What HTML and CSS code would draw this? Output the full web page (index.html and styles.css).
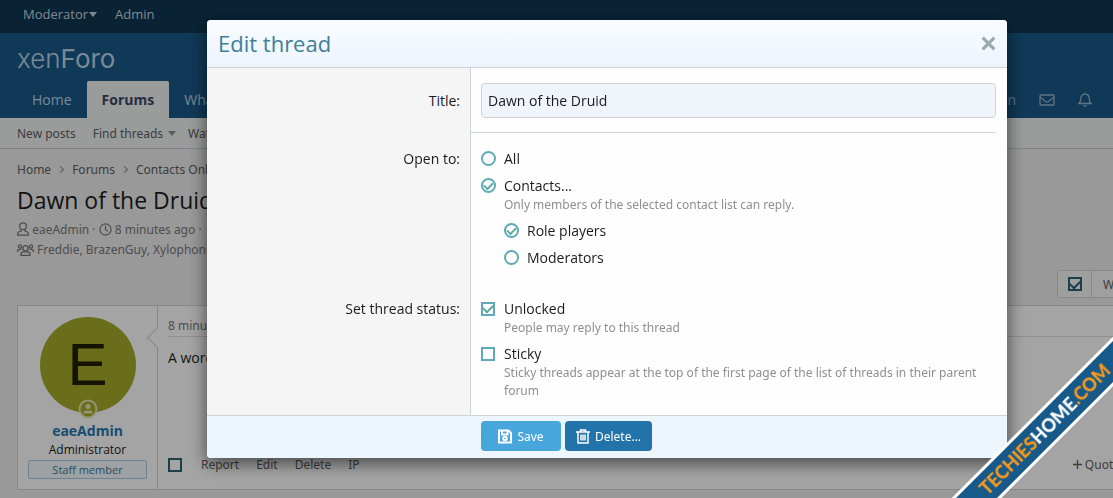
FILE: index.html
```html
<!DOCTYPE html>
<html lang="en">
<head>
  <meta charset="UTF-8" />
  <meta name="viewport" content="width=device-width, initial-scale=1" />
  <title>Dawn of the Druid | XenForo</title>
  <link rel="stylesheet" href="styles.css">
</head>
<body>

  <div class="page">
    <div class="staff-bar">
      <a href="#">Moderator<span class="caret"></span></a>
      <a href="#">Admin</a>
    </div>

    <header class="header">
      <a href="#" class="logo">xen<b>Foro</b></a>
      <nav class="nav">
        <a href="#">Home</a>
        <a href="#" class="active">Forums</a>
        <a href="#">What's new</a>
        <div class="nav-account">
          <a href="#">eaeAdmin</a>
          <a href="#" aria-label="Conversations">
            <svg class="icon-mail" viewBox="0 0 16 12"><rect x="1" y="1" width="14" height="10" rx="1"/><path d="M1 3l5.500 4.500q1.500 1 3 0L15 3"/></svg>
          </a>
          <a href="#" aria-label="Alerts">
            <svg class="icon-bell" viewBox="0 0 14 15"><path d="M7 .5v1.500M1 11.500h12c-1.300-1.300-1.800-2.400-1.800-5C11.200 4 9.500 2.200 7 2.200S2.800 4 2.800 6.500c0 2.600-.5 3.700-1.800 5z"/><path d="M5.500 13.300q1.500 1.500 3 0"/></svg>
          </a>
        </div>
      </nav>
    </header>

    <div class="sub-nav">
      <a href="#">New posts</a>
      <a href="#">Find threads<span class="caret"></span></a>
      <a href="#">Watched</a>
    </div>

    <main class="content">
      <div class="breadcrumb">
        <a href="#">Home</a><i></i><a href="#">Forums</a><i></i><a href="#">Contacts Only</a>
      </div>
      <h1>Dawn of the Druid</h1>
      <div class="meta">
        <svg class="icon-user" viewBox="0 0 12 14"><circle cx="6" cy="4.200" r="3.400"/><path d="M4 7.500v1.500L1.600 10Q.7 10.600.7 12v1.200h10.600V12q0-1.400-.9-2L8 9V7.500"/></svg>
        <a href="#">eaeAdmin</a> ·
        <svg class="icon-clock" viewBox="0 0 14 14"><circle cx="7" cy="7" r="6"/><path d="M7 3v4.300l2.500 1.500"/></svg>
        <a href="#">8 minutes ago</a> ·
      </div>
      <div class="meta">
        <svg class="icon-group" viewBox="0 0 17 12"><circle cx="8.500" cy="4.200" r="2.600"/><circle cx="3" cy="2.500" r="1.600"/><circle cx="14" cy="2.500" r="1.600"/><path d="M4 11.300V10q0-2.200 2.500-2.200h4q2.500 0 2.500 2.200v1.300zM.6 8V7q0-1.700 2.400-1.700h1.500M16.400 8V7q0-1.700-2.400-1.700h-1.500"/></svg>
        Freddie, BrazenGuy, Xylophonist
      </div>

      <div class="toolbar">
        <label class="tool"><input type="checkbox" class="check" aria-label="Select for moderation" checked></label>
        <button class="tool tool-text">Watch</button>
      </div>

      <article class="message">
        <div class="user">
          <div class="avatar">E
            <svg class="online" viewBox="0 0 20 20"><circle class="ring" cx="10" cy="10" r="8.500"/><circle class="fill" cx="10" cy="7.500" r="2.500"/><path class="fill" d="M5.500 14q0-2.600 2.800-2.600h3.400q2.800 0 2.800 2.600v.6h-9z"/></svg>
          </div>
          <a href="#" class="username">eaeAdmin</a>
          <div class="user-title">Administrator</div>
          <div class="user-banner">Staff member</div>
        </div>
        <div class="post">
          <div class="post-date">8 minutes ago</div>
          <p>A word of warning</p>
          <div class="actions">
            <input type="checkbox" class="check" aria-label="Select post">
            <a href="#">Report</a>
            <a href="#">Edit</a>
            <a href="#">Delete</a>
            <a href="#">IP</a>
            <a href="#" class="quote"><svg class="icon-plus" viewBox="0 0 9 9"><path d="M0 4.500h9M4.500 0v9"/></svg> Quote</a>
          </div>
        </div>
      </article>
    </main>
  </div>

  <div class="overlay">
    <form class="dialog" role="dialog" aria-labelledby="dialog-title">
      <div class="dialog-header">
        <h2 id="dialog-title">Edit thread</h2>
        <button type="button" class="close" aria-label="Close">
          <svg viewBox="0 0 16 16"><path d="M2.500 2.500l11 11M13.500 2.500l-11 11"/></svg>
        </button>
      </div>

      <div class="row row-input">
        <div class="row-label"><label for="title">Title:</label></div>
        <div class="row-body">
          <input type="text" id="title" class="input" value="Dawn of the Druid">
        </div>
      </div>

      <div class="row">
        <div class="row-label" id="open-label">Open to:</div>
        <div class="row-body choices" role="group" aria-labelledby="open-label">
          <div>
            <label class="choice"><input type="radio" class="radio" name="open">All</label>
          </div>
          <div>
            <label class="choice"><input type="radio" class="radio" name="open" checked>Contacts...</label>
            <div class="hint">Only members of the selected contact list can reply.</div>
            <div class="choices sub-choices">
              <label class="choice"><input type="radio" class="radio" name="list" checked>Role players</label>
              <label class="choice"><input type="radio" class="radio" name="list">Moderators</label>
            </div>
          </div>
        </div>
      </div>

      <div class="row">
        <div class="row-label" id="status-label">Set thread status:</div>
        <div class="row-body choices" role="group" aria-labelledby="status-label">
          <div>
            <label class="choice"><input type="checkbox" class="check" checked>Unlocked</label>
            <div class="hint">People may reply to this thread</div>
          </div>
          <div>
            <label class="choice"><input type="checkbox" class="check">Sticky</label>
            <div class="hint">Sticky threads appear at the top of the first page of the list of threads in their parent forum</div>
          </div>
        </div>
      </div>

      <div class="dialog-footer">
        <button type="submit" class="button save">
          <svg viewBox="0 0 14 14"><path d="M1 1h9.500L13 3.500V13H1z"/><path d="M4 1.500V5h5.500V1.500"/><circle cx="7" cy="9" r="1.800"/></svg>Save
        </button>
        <button type="button" class="button delete">
          <svg viewBox="0 0 14 15"><path d="M0 3h14M4.500 2.500V1h5v1.500M2 3v11h10V3M5 5.500v6M7 5.500v6M9 5.500v6"/></svg>Delete...
        </button>
      </div>
    </form>
  </div>

  <div class="ribbon"><span>TECHIES</span>HOME<span>.COM</span></div>

</body>
</html>
```

FILE: styles.css
```css
:root {
  --text: #1c1c1c;
  --dimmed: #5c5f60;
  --muted: #8f8f8f;
  --border: #cfd3d8;
  --header: #185886;
  --blue: #2577b1;
  --control: #5fa9b8;
  --bleed: 101px; /* the page runs on past the right edge */
  --small: 12px "Noto Sans", "Open Sans", sans-serif;
}

* {
  box-sizing: border-box;
}

body {
  margin: 0;
  background: #ebebeb;
  color: var(--text);
  font: 14px/21px "Open Sans", "Noto Sans", sans-serif;
  overflow: hidden;
}

a {
  color: inherit;
  text-decoration: none;
}

svg {
  fill: none;
  stroke: currentColor;
  stroke-width: 1.3;
}

.page {
  width: calc(100% + var(--bleed));
}

.caret {
  display: inline-block;
  margin-left: 1px;
  border: 4px solid transparent;
  border-top: 5px solid currentColor;
  border-bottom: 0;
  vertical-align: 2px;
}

/* header */

.staff-bar {
  display: flex;
  gap: 18px;
  height: 33px;
  padding: 4px 23px;
  background: #0f3652;
  color: #c3d3df;
  font-size: 13px;
}

.header {
  background: var(--header);
  color: #b8d4e6;
}

.logo {
  display: block;
  height: 48px;
  padding-left: 17px;
  font: 300 26px/52px Inter, sans-serif;
}

.logo b {
  font-weight: 400;
}

.nav {
  display: flex;
  height: 37px;
  padding-left: 17px;
  line-height: 38px;
}

.nav > a {
  padding: 0 15px;
}

.nav .active {
  background: #edeeef;
  color: #3a4667;
  font-weight: 700;
  border-radius: 2px 2px 0 0;
}

.nav-account {
  display: flex;
  align-items: center;
  gap: 23px;
  margin-left: auto;
  padding-right: 122px;
  color: #93b4c9;
}

.nav-account svg {
  display: block;
}

.icon-mail {
  width: 16px;
  height: 12px;
}

.icon-bell {
  width: 14px;
  height: 15px;
}

.sub-nav {
  display: flex;
  gap: 17px;
  height: 31px;
  padding: 5px 17px;
  background: #edeeef;
  border-bottom: 1px solid #c5c9cc;
  color: var(--dimmed);
  font: var(--small);
  line-height: 21px;
}

.sub-nav .caret {
  margin: 0 -5px 0 5px;
  color: var(--muted);
}

/* thread */

.content {
  padding: 10px 17px;
}

.breadcrumb {
  display: flex;
  align-items: center;
  color: var(--dimmed);
  font: var(--small);
  line-height: 21px;
}

.breadcrumb i {
  width: 5px;
  height: 5px;
  margin: 0 9px 0 7px;
  border: solid var(--muted);
  border-width: 1px 1px 0 0;
  transform: rotate(45deg);
}

h1 {
  margin: 5px 0;
  font-size: 23px;
  line-height: 30px;
  font-weight: 400;
}

.meta {
  height: 20px;
  color: #777;
  font: var(--small);
  line-height: 20px;
  white-space: nowrap;
}

.meta svg {
  vertical-align: -2px;
}

.icon-user {
  width: 12px;
  height: 14px;
}

.icon-clock {
  width: 13px;
  height: 13px;
}

.icon-group {
  width: 17px;
  height: 12px;
}

.toolbar {
  display: flex;
  justify-content: flex-end;
  margin: 10px 0 7px;
}

.tool {
  display: flex;
  align-items: center;
  justify-content: center;
  width: 35px;
  height: 28px;
  border: 1px solid #d0d0d0;
  border-radius: 4px 0 0 4px;
  background: #f4f4f4;
}

.tool-text {
  justify-content: flex-start;
  width: 106px;
  margin-left: -1px;
  padding: 0 11px;
  border-radius: 0 4px 4px 0;
  color: var(--dimmed);
  font: var(--small);
}

.page .check {
  border-color: #2b6270;
  color: #2b6270;
}

.message {
  display: flex;
  border: 1px solid #d0d0d0;
  background: #fcfcfd;
}

.user {
  position: relative;
  display: flex;
  flex-direction: column;
  align-items: center;
  width: 140px;
  height: 183px;
  padding: 11px 10px;
  border-right: 1px solid #d0d0d0;
}

/* arrow pointing at the user cell */
.user::after {
  content: "";
  position: absolute;
  top: 24px;
  right: -8px;
  width: 14px;
  height: 14px;
  border: solid #d0d0d0;
  border-width: 0 0 1px 1px;
  background: #fcfcfd;
  transform: rotate(45deg);
}

.avatar {
  position: relative;
  width: 96px;
  height: 96px;
  border-radius: 50%;
  background: #a3a929;
  color: #1f1f00;
  font: 60px/96px "Liberation Sans", sans-serif;
  text-align: center;
}

.online {
  position: absolute;
  left: 38px;
  bottom: -6px;
  width: 20px;
  height: 20px;
}

.online .ring {
  fill: #a3a929;
  stroke: #e3e5b4;
  stroke-width: 2;
}

.online .fill {
  fill: #e3e5b4;
  stroke: none;
}

.username {
  margin-top: 7px;
  color: var(--blue);
  font-weight: 700;
}

.user-title {
  font-size: 12px;
  line-height: 18px;
}

.user-banner {
  width: 100%;
  margin-top: 1px;
  border: 1px solid #a5cae4;
  border-radius: 2px;
  background: #f2f7fb;
  color: #3a7a9c;
  font-size: 11px;
  line-height: 17px;
  text-align: center;
}

.post {
  display: flex;
  flex: 1;
  flex-direction: column;
  padding: 10px 10px 14px;
}

.post-date {
  border-bottom: 1px solid #dadada;
  color: #777;
  font: var(--small);
  line-height: 20px;
}

.post p {
  margin: 10px 0;
}

.actions {
  display: flex;
  align-items: center;
  gap: 17px;
  margin-top: auto;
  color: var(--dimmed);
  font: var(--small);
  line-height: 21px;
}

.actions .check {
  margin-right: 2px;
}

.actions .quote {
  margin-left: auto;
  padding-right: 66px;
}

.icon-plus {
  width: 9px;
  height: 9px;
}

/* dialog */

.overlay {
  position: fixed;
  inset: 0 calc(-1 * var(--bleed)) 0 0;
  padding: 20px 10px;
  background: rgba(0, 0, 0, 0.35);
}

.dialog {
  max-width: 800px;
  margin: 0 auto;
  overflow: hidden;
  border-radius: 4px;
  background: #fefefe;
  box-shadow: 0 5px 18px rgba(0, 0, 0, 0.6);
}

.dialog-header {
  display: flex;
  align-items: center;
  justify-content: space-between;
  height: 48px;
  padding: 0 10px 0 11px;
  border-bottom: 1px solid var(--border);
  background: linear-gradient(#f8fcff, #edf4fd);
}

.dialog-header h2 {
  margin: 0;
  color: #407f99;
  font-size: 22px;
  font-weight: 400;
}

.close {
  padding: 0;
  border: 0;
  background: none;
  color: #9ba9b1;
}

.close svg {
  display: block;
  width: 17px;
  height: 17px;
  stroke-width: 3;
}

.row {
  display: flex;
}

.row-label {
  width: 33%;
  padding: 15px 10px;
  border-right: 1px solid var(--border);
  background: #f5f5f6;
  text-align: right;
}

.row-body {
  flex: 1;
  padding: 15px 11px 15px 10px;
}

.row-input {
  line-height: 35px;
  background: linear-gradient(var(--border), var(--border)) bottom right 11px / 66% 1px no-repeat;
}

.input {
  display: block;
  width: 100%;
  height: 35px;
  padding: 0 6px;
  border: 1px solid var(--border);
  border-radius: 4px;
  background: #f0f5fc;
  color: var(--text);
  font: inherit;
}

.choices {
  display: flex;
  flex-direction: column;
  gap: 6px;
}

.choice {
  display: flex;
  align-items: center;
}

.hint {
  padding-left: 23px;
  color: var(--muted);
  font: var(--small);
  line-height: 18px;
}

.sub-choices {
  padding: 6px 0 0 23px;
}

.check,
.radio {
  display: grid;
  place-items: center;
  flex: none;
  appearance: none;
  width: 14px;
  height: 14px;
  margin: 0;
  border: 2px solid var(--control);
  color: #60ab9e;
}

.radio {
  width: 15px;
  height: 15px;
  border-radius: 50%;
}

.choice .check {
  margin-right: 9px;
}

.choice .radio {
  margin-right: 8px;
}

.check:checked::before,
.radio:checked::before {
  content: "";
  width: 8px;
  height: 5px;
  margin-bottom: 2px;
  border: solid currentColor;
  border-width: 0 0 2px 2px;
  transform: rotate(-45deg);
}

.radio:checked::before {
  width: 7px;
  height: 4px;
}

.dialog-footer {
  display: flex;
  gap: 4px;
  padding: 5px 0 7px 274px;
  border-top: 1px solid var(--border);
  background: #eef6fd;
}

.button {
  display: flex;
  align-items: center;
  justify-content: center;
  gap: 5px;
  width: 80px;
  height: 30px;
  padding: 0;
  border: 0;
  border-radius: 4px;
  color: #fff;
  font: var(--small);
}

.button svg {
  width: 14px;
  height: 15px;
  stroke-width: 2;
}

.save {
  background: #47a7dc;
}

.delete {
  width: 87px;
  background: #2273a9;
}

.delete svg {
  stroke-width: 1.5;
}

/* corner ribbon */

.ribbon {
  position: fixed;
  right: -82px;
  bottom: 51px;
  width: 300px;
  border: solid #fff;
  border-width: 3px 0;
  background: #175a8a;
  color: #fff;
  font: 900 18px/29px Lato, sans-serif;
  text-align: center;
  transform: rotate(-45deg);
}

.ribbon span {
  color: #f7991c;
}
```
